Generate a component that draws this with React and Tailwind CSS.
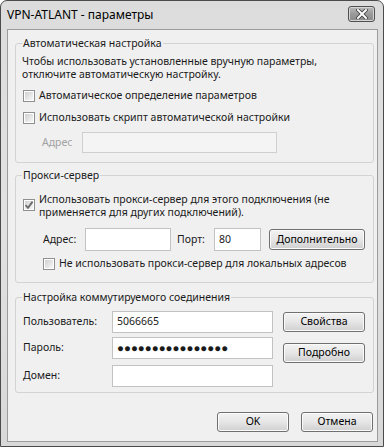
import React from 'react';

const winFont = "font-['Noto_Sans','Open_Sans',sans-serif]";

function CheckBox({ checked }) {
    return (
        <span className="flex h-[12px] w-[12px] shrink-0 border border-[#8e8f8f] bg-white">
            <span className="relative flex h-full w-full border border-white bg-gradient-to-br from-[#d0d0d0] to-[#f7f7f7]">
                {checked && (
                    <svg className="absolute -left-[1px] -top-[1px]" width="10" height="10" viewBox="0 0 10 10">
                        <path d="M1.5 5.2 L4 7.8 L8.6 1.6" fill="none" stroke="#6a6a6a" strokeWidth="1.8" />
                    </svg>
                )}
            </span>
        </span>
    );
}

function Button({ children, className = '' }) {
    return (
        <div
            className={`flex items-center justify-center rounded-[3px] border border-[#707070] bg-gradient-to-b from-[#f3f3f3] via-[#e6e6e6] to-[#cfcfcf] text-black shadow-[inset_0_0_0_1px_#fbfbfb] ${className}`}
        >
            {children}
        </div>
    );
}

function Field({ children, className = '', disabled }) {
    return (
        <div
            className={`flex items-center border px-[4px] ${disabled ? 'border-[#cfcfcf] bg-[#f4f4f4]' : 'border-[#c2c2c2] bg-white'} ${className}`}
        >
            {children}
        </div>
    );
}

function Group({ title, children, className = '' }) {
    return (
        <fieldset className={`w-[359px] rounded-[3px] border border-[#d3d3d3] pl-[6px] ${className}`}>
            <legend className="px-[1px] leading-[16px]">{title}</legend>
            {children}
        </fieldset>
    );
}

export default function App() {
    return (
        <div className={`${winFont} text-[10.5px] text-[#1a1a1a]`}>
            <div className="flex h-[447px] w-[384px] flex-col rounded-t-[7px] border border-[#4b4b4b] bg-gradient-to-b from-[#dcdcdc] via-[#e2e2e2] to-[#d8d8d8] pb-[4px] pl-[6px] pr-[5px]">
                {/* title bar */}
                <div className="flex h-[28px] shrink-0 items-start justify-between">
                    <span className="mt-[5px] text-[12px] leading-[18px] text-black">VPN-ATLANT - параметры</span>
                    <div className="mr-[3px] mt-[5px] flex h-[16px] w-[27px] items-center justify-center rounded-[3px] border border-[#4f4f4f] bg-gradient-to-b from-[#b9b9b9] via-[#9a9a9a] to-[#8a8a8a] shadow-[inset_0_0_0_1px_#d6d6d6]">
                        <svg width="12" height="10" viewBox="0 0 12 10">
                            <path d="M2 1 L10 9 M10 1 L2 9" stroke="#3a3a3a" strokeWidth="3.6" strokeLinecap="square" />
                            <path d="M2 1 L10 9 M10 1 L2 9" stroke="#ffffff" strokeWidth="2" strokeLinecap="square" />
                        </svg>
                    </div>
                </div>

                {/* client area */}
                <div className="flex flex-1 flex-col border border-[#9c9c9c] bg-[#f0f0f0] pl-[7px] pr-[3px]">
                    <Group title="Автоматическая настройка" className="mt-[5px] pb-[9px]">
                        <div className="mt-[4px] leading-[13px]">
                            Чтобы использовать установленные вручную параметры,
                            <br />
                            отключите автоматическую настройку.
                        </div>
                        <label className="ml-[1px] mt-[8px] flex h-[14px] items-center gap-[4px]">
                            <CheckBox />
                            <span>Автоматическое определение параметров</span>
                        </label>
                        <label className="ml-[1px] mt-[8px] flex h-[14px] items-center gap-[4px]">
                            <CheckBox />
                            <span>Использовать скрипт автоматической настройки</span>
                        </label>
                        <div className="mt-[7px] flex h-[21px] items-center">
                            <span className="ml-[20px] w-[40px] text-[#a2a2a2]">Адрес</span>
                            <Field disabled className="h-[21px] w-[195px]" />
                        </div>
                    </Group>

                    <Group title="Прокси-сервер" className="mt-[4px] pb-[11px]">
                        <label className="ml-[1px] mt-[10px] flex gap-[4px]">
                            <span className="mt-[6px]">
                                <CheckBox checked />
                            </span>
                            <span className="leading-[13px]">
                                Использовать прокси-сервер для этого подключения (не
                                <br />
                                применяется для других подключений).
                            </span>
                        </label>
                        <div className="mt-[9px] flex h-[23px] items-center">
                            <span className="ml-[21px] w-[42px]">Адрес:</span>
                            <Field className="h-[23px] w-[86px]" />
                            <span className="ml-[6px] w-[37px]">Порт:</span>
                            <Field className="h-[23px] w-[47px]">80</Field>
                            <Button className="ml-[8px] h-[21px] w-[96px]">Дополнительно</Button>
                        </div>
                        <label className="ml-[21px] mt-[6px] flex h-[14px] items-center gap-[4px]">
                            <CheckBox />
                            <span>Не использовать прокси-сервер для локальных адресов</span>
                        </label>
                    </Group>

                    <Group title="Настройка коммутируемого соединения" className="mt-[6px] pb-[5px]">
                        <div className="flex">
                            <div className="flex flex-col">
                                <div className="mt-[6px] flex h-[22px] items-center">
                                    <span className="ml-[1px] w-[89px]">Пользователь:</span>
                                    <Field className="h-[22px] w-[161px]">5066665</Field>
                                </div>
                                <div className="mt-[4px] flex h-[22px] items-center">
                                    <span className="ml-[1px] w-[89px]">Пароль:</span>
                                    <Field className="h-[22px] w-[161px] text-[11.5px]">
                                        ●●●●●●●●●●●●●●●●
                                    </Field>
                                </div>
                                <div className="mt-[6px] flex h-[22px] items-center">
                                    <span className="ml-[1px] w-[89px]">Домен:</span>
                                    <Field className="h-[22px] w-[161px]" />
                                </div>
                            </div>
                            <div className="ml-[10px] flex flex-col">
                                <Button className="mt-[7px] h-[20px] w-[82px]">Свойства</Button>
                                <Button className="mt-[11px] h-[20px] w-[82px]">Подробно</Button>
                            </div>
                        </div>
                    </Group>

                    <div className="mt-[19px] flex justify-end gap-[12px] pr-[1px]">
                        <Button className="h-[20px] w-[72px]">OK</Button>
                        <Button className="h-[20px] w-[72px]">Отмена</Button>
                    </div>
                </div>
            </div>
        </div>
    );
}
